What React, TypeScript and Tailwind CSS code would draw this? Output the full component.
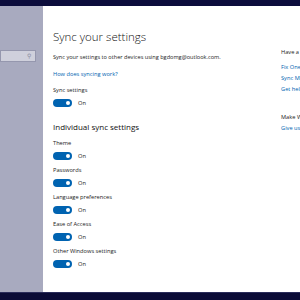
const font = { fontFamily: '"Open Sans", "Noto Sans", sans-serif' };

function Toggle() {
  return (
    <div className="flex items-center gap-[6px]">
      <div className="flex h-[8px] w-[19px] items-center justify-end rounded-full bg-[#0063b1] pr-[2px]">
        <div className="h-[4px] w-[4px] rounded-full bg-white" />
      </div>
      <span className="text-[5.7px] leading-[8px] text-[#222]">On</span>
    </div>
  );
}

function Setting({ label }: { label: string }) {
  return (
    <div className="flex flex-col">
      <div className="text-[5.7px] leading-[8px] text-[#222]">{label}</div>
      <div className="mt-[5px]">
        <Toggle />
      </div>
    </div>
  );
}

export default function App() {
  const items = ["Theme", "Passwords", "Language preferences", "Ease of Access", "Other Windows settings"];
  return (
    <div className="flex h-[300px] w-[300px] flex-col overflow-hidden" style={font}>
      <div className="h-[6px] bg-[#0c0d3c]" />
      <div className="flex h-[286px]">
        <div className="w-[43px] shrink-0 bg-[#a8aabf] pt-[44px]">
          <div className="flex h-[12px] w-[36px] items-center justify-end border border-[#9597ae] bg-[#cfd0dc] pr-[4px]">
            <span className="text-[6px] leading-none text-[#8a8ca0]">⚲</span>
          </div>
        </div>
        <div className="flex flex-1 overflow-hidden bg-white">
          <div className="w-[238px] shrink-0 pl-[10px] pt-[23px]">
            <h1 className="whitespace-nowrap text-[11.5px] font-light leading-[16px] text-[#111]">Sync your settings</h1>
            <p className="mt-[8px] whitespace-nowrap text-[5.6px] leading-[8px] text-[#222]">
              Sync your settings to other devices using bgdomg@outlook.com.
            </p>
            <div className="mt-[9px] text-[5.7px] leading-[8px] text-[#0063b1]">How does syncing work?</div>
            <div className="mt-[8px]">
              <Setting label="Sync settings" />
            </div>
            <h2 className="mt-[14px] whitespace-nowrap text-[8px] leading-[12px] text-[#111]">Individual sync settings</h2>
            <div className="mt-[6px] flex flex-col gap-[6px]">
              {items.map((it) => (
                <Setting key={it} label={it} />
              ))}
            </div>
          </div>
          <div className="whitespace-nowrap pt-[42px] text-[5.7px] leading-[8px]">
            <div className="text-[#222]">Have a question?</div>
            <div className="mt-[7px] flex flex-col gap-[3px] text-[#0063b1]">
              <div>Fix OneDrive sync problems</div>
              <div>Sync Microsoft Edge favorites</div>
              <div>Get help</div>
            </div>
            <div className="mt-[20px] text-[#222]">Make Windows better</div>
            <div className="mt-[3px] text-[#0063b1]">Give us feedback</div>
          </div>
        </div>
      </div>
      <div className="h-[8px] border-t border-[#2a2c5a] bg-[#0a0b36]" />
    </div>
  );
}
